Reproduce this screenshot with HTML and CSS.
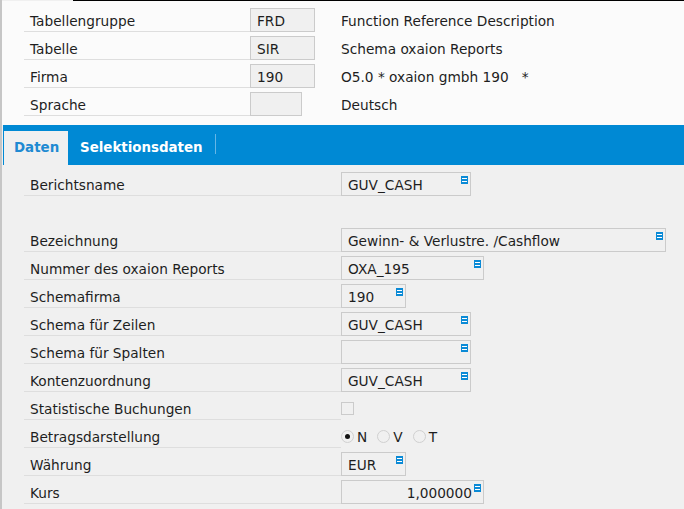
FILE: index.html
```html
<!DOCTYPE html>
<html lang="de">
<head>
    <meta charset="UTF-8">
    <title>Schema oxaion Reports</title>
    <link rel="stylesheet" href="styles.css">
</head>
<body>
    <div class="window">
        <div class="top-line"></div>
        <div class="head">
            <div class="row">
                <div class="label">Tabellengruppe</div>
                <div class="cell"><div class="field key">FRD</div></div>
                <div class="desc">Function Reference Description</div>
            </div>
            <div class="row">
                <div class="label">Tabelle</div>
                <div class="cell"><div class="field key">SIR</div></div>
                <div class="desc">Schema oxaion Reports</div>
            </div>
            <div class="row">
                <div class="label">Firma</div>
                <div class="cell"><div class="field key">190</div></div>
                <div class="desc">O5.0 * oxaion gmbh 190&nbsp;&nbsp;&nbsp;*</div>
            </div>
            <div class="row">
                <div class="label">Sprache</div>
                <div class="cell"><div class="field key short"></div></div>
                <div class="desc">Deutsch</div>
            </div>
        </div>

        <div class="tabs">
            <div class="tab active">Daten</div>
            <div class="tab">Selektionsdaten</div>
            <div class="tab-sep"></div>
        </div>

        <div class="panel" id="panel"></div>
    </div>

    <script>
        const fields = [
            { label: "Berichtsname", value: "GUV_CASH", width: 130, help: true },
            { blank: true },
            { label: "Bezeichnung", value: "Gewinn- & Verlustre. /Cashflow", width: 325, help: true },
            { label: "Nummer des oxaion Reports", value: "OXA_195", width: 143, help: true },
            { label: "Schemafirma", value: "190", width: 65, help: true },
            { label: "Schema für Zeilen", value: "GUV_CASH", width: 130, help: true },
            { label: "Schema für Spalten", value: "", width: 130, help: true },
            { label: "Kontenzuordnung", value: "GUV_CASH", width: 130, help: true },
            { label: "Statistische Buchungen", type: "check" },
            { label: "Betragsdarstellung", type: "radio", options: ["N", "V", "T"], selected: "N" },
            { label: "Währung", value: "EUR", width: 65, help: true },
            { label: "Kurs", value: "1,000000", width: 143, help: true, right: true }
        ];

        const helpIcon = '<svg class="help" width="7" height="8" viewBox="0 0 7 8">' +
            '<rect width="7" height="8" fill="#0a8ad6"/>' +
            '<rect x="1" y="2" width="5" height="1" fill="#fff"/>' +
            '<rect x="1" y="5" width="5" height="1" fill="#fff"/></svg>';

        function buildPanel() {
            const panel = document.getElementById('panel');
            fields.forEach(f => {
                const row = document.createElement('div');
                if (f.blank) {
                    row.className = 'row blank';
                    panel.appendChild(row);
                    return;
                }
                row.className = 'row';
                let control = '';
                if (f.type === 'check') {
                    control = '<div class="check"></div>';
                } else if (f.type === 'radio') {
                    control = '<div class="radios">' + f.options.map(o =>
                        `<span class="radio${o === f.selected ? ' on' : ''}"></span><span class="opt">${o}</span>`
                    ).join('') + '</div>';
                } else {
                    control = `<div class="field${f.right ? ' right' : ''}" style="width:${f.width}px">${f.value}${f.help ? helpIcon : ''}</div>`;
                }
                row.innerHTML = `<div class="label wide">${f.label}</div>${control}`;
                panel.appendChild(row);
            });
        }

        buildPanel();
    </script>
</body>
</html>
```

FILE: styles.css
```css
body {
    margin: 0;
    background-color: #f0f0f0;
    color: #1e1e1e;
    font-family: "DejaVu Sans", Verdana, sans-serif;
    font-size: 13.7px;
}
.window {
    border-left: 2px solid #c6c6c6;
    height: 509px;
    overflow: hidden;
}
.top-line {
    height: 1px;
    margin-left: 71px;
    background-color: #000;
}
.head {
    background-color: #fbfbfb;
    padding: 7px 0 9px 22px;
    display: flex;
    flex-direction: column;
    gap: 4px;
}
.row {
    display: flex;
    align-items: center;
    height: 24px;
}
.panel {
    padding: 7px 0 0 22px;
    display: flex;
    flex-direction: column;
    gap: 4px;
}
.row.blank {
    height: 24px;
}
.label {
    width: 226px;
    height: 24px;
    box-sizing: border-box;
    padding: 2px 0 0 6px;
    line-height: 22px;
    border-bottom: 1px solid #dedede;
    white-space: nowrap;
}
.label.wide {
    width: 317px;
}
.cell {
    width: 91px;
}
.field {
    position: relative;
    height: 24px;
    box-sizing: border-box;
    border: 1px solid #cbcbcb;
    background-color: #f0f0f0;
    padding: 1px 0 0 6px;
    line-height: 22px;
    white-space: nowrap;
}
.field.key {
    width: 65px;
}
.field.short {
    width: 52px;
}
.field.right {
    text-align: right;
    padding-right: 11px;
}
.help {
    position: absolute;
    top: 3px;
    right: 2px;
}
.desc {
    padding-top: 2px;
}
.tabs {
    background-color: #0089d4;
    height: 40px;
    margin-left: 1px;
    display: flex;
    align-items: flex-end;
    padding-left: 1px;
}
.tab {
    height: 34px;
    line-height: 34px;
    padding: 0 12px;
    font-weight: bold;
    font-size: 13.4px;
    color: #fff;
}
.tab.active {
    background-color: #f0f0f0;
    color: #1f8ad2;
    padding: 0 10px;
    width: 44px;
}
.tab-sep {
    width: 1px;
    height: 20px;
    margin-bottom: 11px;
    background-color: #66b6e6;
}
.check {
    width: 13px;
    height: 13px;
    box-sizing: border-box;
    border: 1px solid #cbcbcb;
    margin-top: 1px;
}
.radios {
    display: flex;
    align-items: center;
    padding-top: 1px;
}
.radio {
    width: 13px;
    height: 13px;
    box-sizing: border-box;
    border: 1px solid #d0d0d0;
    border-radius: 50%;
    display: flex;
    align-items: center;
    justify-content: center;
}
.radio.on::after {
    content: "";
    width: 5px;
    height: 5px;
    border-radius: 50%;
    background-color: #111;
}
.opt {
    margin: 0 10px 0 3px;
}
```
